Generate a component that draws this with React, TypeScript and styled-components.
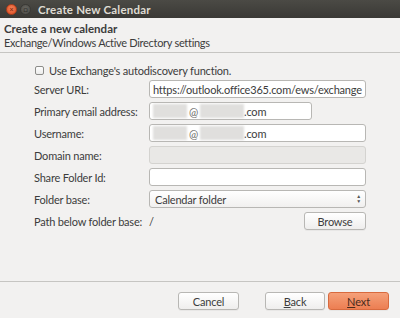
import React from "react";
import styled, { createGlobalStyle } from "styled-components";

const Global = createGlobalStyle`
  html, body { margin: 0; padding: 0; }
  body { width: 400px; height: 318px; overflow: hidden; background: #f2f1f0; }
  * { box-sizing: border-box; }
`;

const Window = styled.div`
  width: 400px;
  height: 318px;
  display: flex;
  flex-direction: column;
  background: #f2f1f0;
  font-family: Lato, "Open Sans", sans-serif;
  font-size: 11px;
  letter-spacing: -0.2px;
  color: #3c3c3c;
`;

const TitleBar = styled.div`
  height: 18px;
  display: flex;
  align-items: center;
  padding-left: 6px;
  gap: 2px;
  background: linear-gradient(#4b4a45, #3a3935);
  color: #dfdbd2;
  font-weight: 700;
  font-size: 11.5px;
`;

const WinBtn = styled.div<{ $close?: boolean }>`
  width: 11px;
  height: 11px;
  border-radius: 50%;
  margin-right: 1px;
  background: ${(p) => (p.$close ? "radial-gradient(circle at 50% 40%, #f5845a, #dd4a1f)" : "radial-gradient(circle at 50% 40%, #66655f, #4a4945)")};
  border: 1px solid ${(p) => (p.$close ? "#b0401d" : "#3a3935")};
  display: flex;
  align-items: center;
  justify-content: center;
  font-size: 7px;
  line-height: 1;
  color: ${(p) => (p.$close ? "#8a2a10" : "#2e2d2a")};
`;

const TitleText = styled.span`
  margin-left: 4px;
  letter-spacing: 0.2px;
`;

const Header = styled.div`
  padding: 4px 4px 0 4px;
  height: 35px;
  display: flex;
  flex-direction: column;
  border-bottom: 1px solid #c6c5c2;
`;

const HeaderTitle = styled.div`
  font-weight: 700;
  line-height: 14px;
  font-size: 11.5px;
  letter-spacing: 0;
`;

const HeaderSub = styled.div`
  line-height: 14px;
  letter-spacing: -0.3px;
`;

const Form = styled.div`
  flex: 1;
  padding: 9px 34px 0 34px;
  display: flex;
  flex-direction: column;
`;

const CheckRow = styled.label`
  display: flex;
  align-items: center;
  height: 16px;
  margin-bottom: 2px;
  padding-left: 1px;
  gap: 5px;
`;

const Check = styled.span`
  width: 9px;
  height: 9px;
  border: 1px solid #8c8c89;
  border-radius: 2px;
  background: linear-gradient(#fdfdfd, #ececeb);
`;

const Grid = styled.div`
  display: grid;
  grid-template-columns: 115px 1fr;
  grid-auto-rows: 18px;
  row-gap: 4px;
  align-items: center;
`;

const Label = styled.span`
  white-space: nowrap;
`;

const Input = styled.div<{ $disabled?: boolean; $width?: string }>`
  height: 18px;
  width: ${(p) => p.$width || "100%"};
  border: 1px solid ${(p) => (p.$disabled ? "#d4d3d0" : "#b8b7b4")};
  border-radius: 3px;
  background: ${(p) => (p.$disabled ? "#e9e8e6" : "#ffffff")};
  padding: 0 3px;
  display: flex;
  align-items: center;
  white-space: nowrap;
  overflow: hidden;
  color: #3c3c3c;
`;

const Blur = styled.span<{ $w: number }>`
  display: inline-block;
  width: ${(p) => p.$w}px;
  height: 14px;
  background: #e0dfdd;
  filter: blur(1px);
`;

const At = styled.span`
  margin: 0 2px;
  color: #6a6a68;
`;

const Combo = styled.div`
  height: 18px;
  border: 1px solid #b8b7b4;
  border-radius: 3px;
  background: linear-gradient(#ffffff, #f1f0ef);
  padding: 0 4px 0 5px;
  display: flex;
  align-items: center;
  justify-content: space-between;
`;

const Arrows = styled.span`
  display: flex;
  flex-direction: column;
  font-size: 5px;
  line-height: 5px;
  color: #555;
`;

const PathRow = styled.div`
  display: flex;
  align-items: center;
  justify-content: space-between;
`;

const Button = styled.div<{ $primary?: boolean; $w?: number }>`
  width: ${(p) => p.$w || 61}px;
  height: 18px;
  border: 1px solid ${(p) => (p.$primary ? "#d86a3e" : "#b8b7b4")};
  border-radius: 3px;
  background: ${(p) => (p.$primary ? "linear-gradient(#f5a079, #ec7e52)" : "linear-gradient(#ffffff, #efeeed)")};
  display: flex;
  align-items: center;
  justify-content: center;
  color: ${(p) => (p.$primary ? "#4a2a1c" : "#3c3c3c")};
  box-shadow: 0 1px 0 rgba(0,0,0,0.04);
`;

const U = styled.span`
  text-decoration: underline;
`;

const Footer = styled.div`
  border-top: 1px solid #c6c5c2;
  height: 37px;
  display: flex;
  align-items: flex-start;
  padding: 10px 11px 0 0;
  justify-content: flex-end;
`;

const CancelWrap = styled.div`
  margin-right: 26px;
`;

const Pair = styled.div`
  display: flex;
  gap: 3px;
`;

export default function App() {
  return (
    <>
      <Global />
      <Window>
        <TitleBar>
          <WinBtn $close>×</WinBtn>
          <WinBtn>□</WinBtn>
          <TitleText>Create New Calendar</TitleText>
        </TitleBar>
        <Header>
          <HeaderTitle>Create a new calendar</HeaderTitle>
          <HeaderSub>Exchange/Windows Active Directory settings</HeaderSub>
        </Header>
        <Form>
          <CheckRow>
            <Check />
            Use Exchange's autodiscovery function.
          </CheckRow>
          <Grid>
            <Label>Server URL:</Label>
            <Input>https://outlook.office365.com/ews/exchange</Input>
            <Label>Primary email address:</Label>
            <Input $width="163px">
              <Blur $w={34} />
              <At>@</At>
              <Blur $w={44} />
              .com
            </Input>
            <Label>Username:</Label>
            <Input>
              <Blur $w={34} />
              <At>@</At>
              <Blur $w={44} />
              .com
            </Input>
            <Label>Domain name:</Label>
            <Input $disabled />
            <Label>Share Folder Id:</Label>
            <Input />
            <Label>Folder base:</Label>
            <Combo>
              Calendar folder
              <Arrows>
                <span>▲</span>
                <span>▼</span>
              </Arrows>
            </Combo>
            <Label>Path below folder base:</Label>
            <PathRow>
              <span>/</span>
              <Button $w={62}>Browse</Button>
            </PathRow>
          </Grid>
        </Form>
        <Footer>
          <CancelWrap>
            <Button>Cancel</Button>
          </CancelWrap>
          <Pair>
            <Button $w={60}>
              <U>B</U>ack
            </Button>
            <Button $primary>
              <U>N</U>ext
            </Button>
          </Pair>
        </Footer>
      </Window>
    </>
  );
}
